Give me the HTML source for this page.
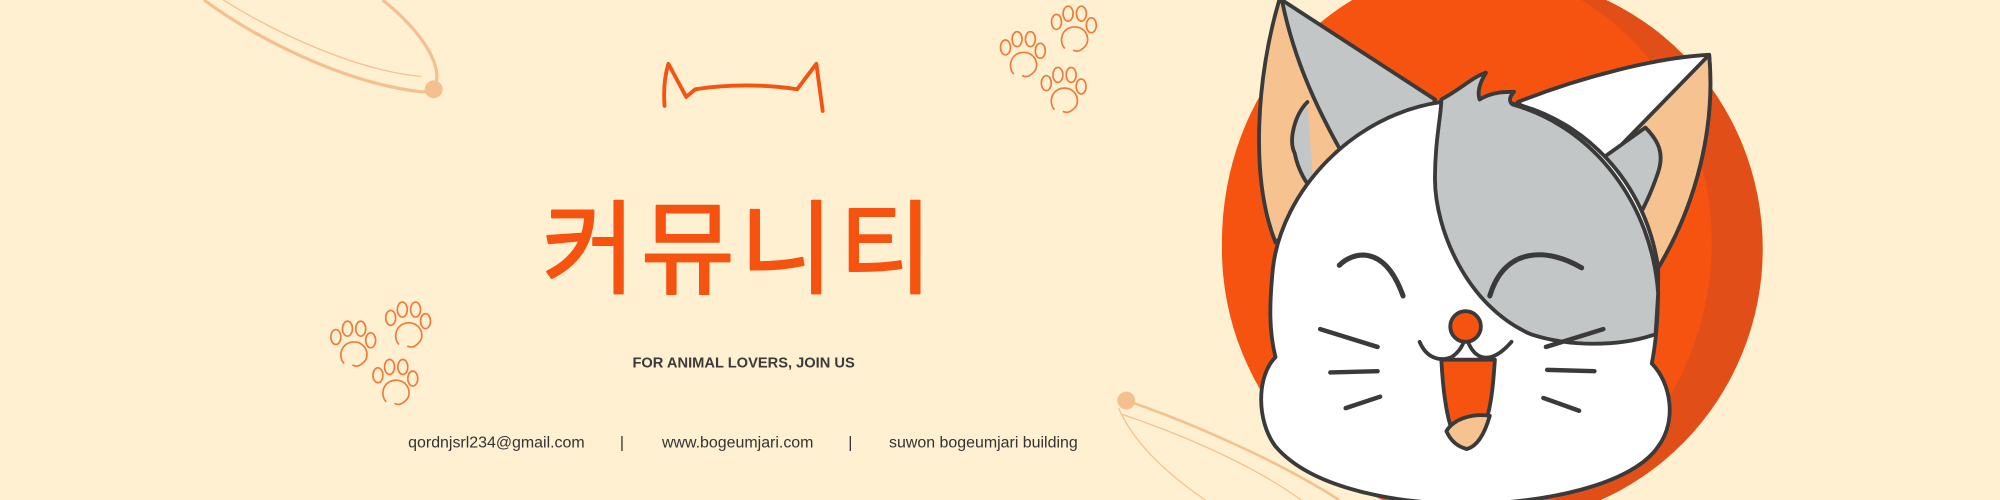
<!DOCTYPE html>
<html><head><meta charset="utf-8"><style>
html,body{margin:0;padding:0;background:#fef0d1;}
svg{display:block}
</style></head><body>
<svg width="2000" height="500" viewBox="0 0 1568 392" xmlns="http://www.w3.org/2000/svg">
<defs>
<g id="paw" fill="none" stroke="#f07a3a" stroke-width="1">
<ellipse cx="-9" cy="-6" rx="3" ry="4.5"/>
<ellipse cx="-2" cy="-11" rx="3" ry="4.5"/>
<ellipse cx="6" cy="-11" rx="3" ry="4.5"/>
<ellipse cx="12" cy="-4" rx="3" ry="4.5"/>
<path d="M-4 10 C-8 6,-6 -3,2 -3 C9 -3,12 5,8 9 C5 12,3 12,1 11"/>
</g>
</defs>
<rect width="1568" height="392" fill="#fef0d1"/>
<g fill="none" stroke="#f5c08e">
<path d="M160 0 C200 30,270 65,330 72 C350 74,350 40,300 0" stroke-width="2.5"/>
<path d="M175 0 C220 28,280 55,330 60" stroke-width="1"/>
</g>
<circle cx="340" cy="70" r="7" fill="#f5c08e"/>
<use href="#paw" transform="translate(800,45) scale(1.3)"/>
<use href="#paw" transform="translate(840,25) scale(1.3)"/>
<use href="#paw" transform="translate(832,73) scale(1.3)"/>
<use href="#paw" transform="translate(275,272) scale(1.3)"/>
<use href="#paw" transform="translate(318,257) scale(1.3)"/>
<use href="#paw" transform="translate(308,302) scale(1.3)"/>
<path d="M521 83 C520 70,521 60,524 50 L538 76 L545 70 C570 66,600 66,625 70 L640 50 L645 87" fill="none" stroke="#f5530f" stroke-width="3" stroke-linecap="round" stroke-linejoin="round"/>
<text x="580" y="224" text-anchor="middle" font-family="'Liberation Sans','Noto Sans CJK KR','NanumGothic',sans-serif" font-weight="normal" font-size="80" fill="#f5530f" stroke="#f5530f" stroke-width="1.5" stroke-linejoin="round" letter-spacing="4">커뮤니티</text>
<text x="583" y="288" text-anchor="middle" font-family="'Liberation Sans',sans-serif" font-weight="bold" font-size="11.5" fill="#3a3a3a">FOR ANIMAL LOVERS, JOIN US</text>
<g font-family="'Liberation Sans',sans-serif" font-size="12.5" fill="#333">
<text x="320" y="351">qordnjsrl234@gmail.com</text>
<text x="486" y="351">|</text>
<text x="519" y="351">www.bogeumjari.com</text>
<text x="665" y="351">|</text>
<text x="697" y="351">suwon bogeumjari building</text>
</g>
<g fill="none" stroke="#f5c08e">
<path d="M883 314 C930 330,1000 360,1050 392" stroke-width="2"/>
<path d="M877 320 C890 350,920 375,945 392" stroke-width="1"/>
<path d="M880 325 C940 345,990 370,1020 392" stroke-width="1"/>
</g>
<circle cx="883" cy="314" r="7" fill="#f5c08e"/>
<ellipse cx="1170" cy="195" rx="212" ry="215" fill="#e24e18"/>
<ellipse cx="1150" cy="190" rx="192" ry="215" fill="#f5530f"/>
<g stroke="#3a3a3a" stroke-width="3" stroke-linejoin="round" stroke-linecap="round">
<path d="M1003 0 C985 60,980 140,1000 190 L1060 140 L1125 78 Z" fill="#f6c290"/>
<path d="M1005 0 C1015 50,1035 90,1055 125 L1120 95 L1125 78 Z" fill="#c3c6c6"/>
<path d="M1025 80 C1015 90,1010 110,1015 120 C1018 135,1025 145,1030 150" fill="#c3c6c6"/>
<path d="M1190 80 C1240 60,1300 45,1340 43 C1345 100,1330 160,1300 210 L1250 150 Z" fill="#ffffff"/>
<path d="M1340 43 C1345 100,1330 160,1300 210 L1260 125 Z" fill="#f6c290"/>
<path d="M1290 100 C1300 110,1305 120,1300 135 C1295 150,1290 160,1285 170 L1255 125 Z" fill="#c3c6c6"/>
<path d="M1130 80 C1060 90,1005 150,998 210 C995 240,995 260,1000 280 C985 295,985 330,1000 350 C1030 385,1100 395,1150 395 C1210 395,1280 380,1300 350 C1315 330,1310 300,1295 285 C1300 260,1300 235,1300 210 C1290 140,1240 95,1190 82 C1170 78,1150 78,1130 80 Z" fill="#ffffff"/>
<path d="M1130 78 C1145 70,1155 60,1165 57 C1160 65,1158 72,1160 78 C1170 72,1180 72,1187 72 C1183 76,1183 80,1186 82 C1250 100,1295 160,1300 230 L1298 262 C1270 272,1230 272,1200 262 C1150 240,1125 180,1125 140 C1125 110,1130 90,1130 78 Z" fill="#c3c6c6"/>
<path d="M1050 208 C1060 198,1085 190,1100 232" fill="none" stroke-width="4"/>
<path d="M1168 232 C1180 192,1215 195,1240 210" fill="none" stroke-width="4"/>
<path d="M1130 282 L1172 282 C1170 310,1168 340,1150 352 C1138 350,1132 320,1130 282 Z" fill="#f5530f"/>
<path d="M1134 338 C1140 328,1155 324,1168 326 C1164 340,1158 350,1150 352 C1142 350,1137 345,1134 338 Z" fill="#f6c290"/>
<path d="M1113 268 C1118 280,1128 284,1138 280 C1144 276,1148 270,1149 262 C1151 270,1155 278,1162 280 C1170 282,1178 276,1185 268" fill="none"/>
<circle cx="1149" cy="256" r="12" fill="#f5530f"/>
<g stroke-width="3.5" fill="none">
<path d="M1035 258 L1080 272"/><path d="M1043 292 L1080 291"/><path d="M1055 320 L1082 311"/>
<path d="M1212 272 L1257 258"/><path d="M1213 290 L1250 291"/><path d="M1210 312 L1238 322"/>
</g>
</g>
</svg>
</body></html>
